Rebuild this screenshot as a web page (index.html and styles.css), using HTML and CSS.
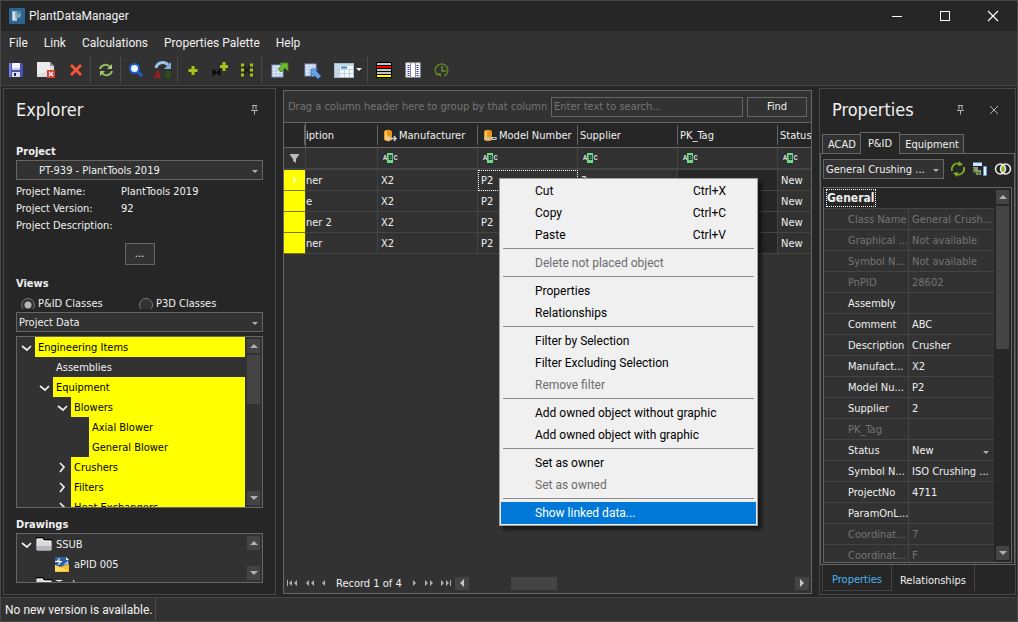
FILE: index.html
```html
<!DOCTYPE html>
<html lang="en">
<head>
<meta charset="utf-8">
<title>PlantDataManager</title>
<link rel="stylesheet" href="styles.css">
</head>
<body>
<div class="window">
  <header class="titlebar">
    <svg class="app-icon" width="16" height="16" viewBox="0 0 16 16"><rect width="16" height="16" rx="1" fill="#2b6590"/><path d="M3 3h5v10H4L3 12z" fill="#a9c3d2"/><path d="M6 3h6v5l-2 2H7z" fill="#7fa2b8"/><path d="M4 4h2v8H4z" fill="#d3e0e6"/><path d="M9 3v3l2-3v3" stroke="#3f7599" fill="none"/></svg>
    <h1 class="app-name">PlantDataManager</h1>
    <div class="win-buttons">
      <button class="win-btn" aria-label="Minimize"><svg width="12" height="12" viewBox="0 0 12 12"><path d="M1 6.5h10" stroke="#fff"/></svg></button>
      <button class="win-btn" aria-label="Maximize"><svg width="12" height="12" viewBox="0 0 12 12"><rect x="1.500" y="1.500" width="9" height="9" fill="none" stroke="#fff"/></svg></button>
      <button class="win-btn" aria-label="Close"><svg width="12" height="12" viewBox="0 0 12 12"><path d="M1 1l10 10M11 1L1 11" stroke="#fff" stroke-width="1.2"/></svg></button>
    </div>
  </header>
  <nav class="menubar">
    <button>File</button><button>Link</button><button>Calculations</button><button>Properties Palette</button><button>Help</button>
  </nav>
  <div class="toolbar">
    <button class="tool" aria-label="Save"><svg width="16" height="16" viewBox="0 0 16 16"><path d="M1 1h13l1 1v13H1z" fill="#4a4fb8"/><path d="M1 1h2v14H1z" fill="#7b80dd"/><rect x="4" y="1" width="8" height="7" fill="#f2f3fb"/><rect x="4" y="6" width="8" height="2" fill="#c9cdf0"/><rect x="4" y="10" width="8" height="5" fill="#dfe1ee"/><rect x="6" y="11" width="2" height="3" fill="#22264f"/></svg></button>
    <button class="tool tool-wide" aria-label="Delete sheet"><svg width="19" height="18" viewBox="0 0 19 18"><path d="M1 1h13l4 4v11H1z" fill="#dcdcdc"/><path d="M1 1h13v8L1 14z" fill="#ececec"/><path d="M14 1l4 4h-4z" fill="#8d8d8d"/><rect x="11" y="9" width="8" height="8" fill="#dd3f33"/><path d="M13 11l4 4M17 11l-4 4" stroke="#fff" stroke-width="1.400"/></svg></button>
    <button class="tool" aria-label="Delete"><svg width="16" height="16" viewBox="0 0 16 16"><path d="M2 4l2-2 4 4 4-4 2 2-4 4 4 4-2 2-4-4-4 4-2-2 4-4z" fill="#e85c44" stroke="#b93020" stroke-width=".7"/></svg></button>
    <span class="tool-sep"></span>
    <button class="tool" aria-label="Refresh"><svg width="16" height="16" viewBox="0 0 16 16"><path d="M2 7c1-4 7-6 10-2M14 9c-1 4-7 6-10 2" fill="none" stroke="#94bb5f" stroke-width="2"/><path d="M14 2v5H9zM2 14V9h5z" fill="#a9cb77"/></svg></button>
    <span class="tool-sep"></span>
    <button class="tool" aria-label="Search"><svg width="16" height="16" viewBox="0 0 16 16"><path d="M9 9l5 5" stroke="#1c62c8" stroke-width="3"/><circle cx="6.500" cy="6.500" r="4.500" fill="#eef6ff" stroke="#1b5ed0" stroke-width="2"/></svg></button>
    <button class="tool" aria-label="Replace"><svg width="18" height="18" viewBox="0 0 18 18"><path d="M2 7c1-6 9-7 12-3" fill="none" stroke="#9cc3e8" stroke-width="3"/><path d="M17 1v7h-7z" fill="#7fb0de"/><text x="0" y="17" class="glyph-a">A</text><text x="11" y="17" class="glyph-b">B</text></svg></button>
    <span class="tool-sep"></span>
    <button class="tool" aria-label="Add"><svg width="16" height="16" viewBox="0 0 16 16"><path d="M8 4v9M3.500 8.500h9" stroke="#a5c413" stroke-width="3"/></svg></button>
    <button class="tool" aria-label="Add valve"><svg width="18" height="18" viewBox="0 0 18 18"><path d="M2 8l7 7V8l-7 7z" fill="#0c0c0c" stroke="#0c0c0c"/><path d="M13 1v9M9 5.500h8" stroke="#a5c413" stroke-width="3"/></svg></button>
    <button class="tool" aria-label="Add group"><svg width="16" height="16" viewBox="0 0 16 16"><path d="M4 3l4 5 4-5M4 13l4-5 4 5" fill="none" stroke="#0c0c0c"/><path d="M2 3h3M2 8h3M2 13h3M11 3h3M11 8h3M11 13h3" stroke="#a5c413" stroke-width="3"/></svg></button>
    <span class="tool-sep"></span>
    <button class="tool tool-wide" aria-label="Export table"><svg width="18" height="18" viewBox="0 0 18 18"><rect x="1" y="4" width="11" height="12" fill="#e8eefb" stroke="#7f95c9"/><path d="M1 7h11M1 10h11M1 13h11M5 4v12M9 4v12" stroke="#b4c3e6"/><path d="M9 2h8v8l-3-3-4 4-3-3 4-4z" fill="#6dbb2f" stroke="#3f8518" stroke-width=".8"/></svg></button>
    <button class="tool tool-wide" aria-label="Import table"><svg width="18" height="18" viewBox="0 0 18 18"><rect x="1" y="3" width="11" height="12" fill="#e8eefb" stroke="#7f95c9"/><path d="M1 6h11M1 9h11M1 12h11M5 3v12M9 3v12" stroke="#b4c3e6"/><path d="M7 8h7l-2 2 5 5-3 3-5-5-2 2z" fill="#69a5e4" stroke="#2a66b4" stroke-width=".8"/></svg></button>
    <button class="tool tool-drop" aria-label="Layouts"><svg width="29" height="18" viewBox="0 0 29 18"><rect x="1.500" y="2.500" width="19" height="14" fill="#f3f7fa" stroke="#a9bccb"/><path d="M2 3h4v13H2zM2 3h18v2H2z" fill="#c8dae6"/><path d="M6.500 3v13M11.500 8v8M16.500 8v8M2 8.500h18M2 12.500h18" stroke="#c0d0dc"/><path d="M8 6.500h6" stroke="#2f88d8" stroke-width="2"/><path d="M23 7h6l-3 3z" fill="#f0f0f0"/></svg></button>
    <span class="tool-sep"></span>
    <button class="tool tool-mid" aria-label="Row colours"><svg width="16" height="16" viewBox="0 0 16 16"><rect width="16" height="16" fill="#000"/><path d="M1 2h14M1 8h14M1 11h14" stroke="#c4c4c4" stroke-width="2"/><path d="M1 5h14" stroke="#f00" stroke-width="2"/><path d="M1 14h14" stroke="#ff0" stroke-width="2"/></svg></button>
    <button class="tool tool-mid" aria-label="Columns"><svg width="16" height="16" viewBox="0 0 16 16"><rect x="1" y="1" width="14" height="14" fill="#fff" stroke="#d9d9d9"/><path d="M5.500 1v14M10.500 1v14" stroke="#8d8d8d"/><path d="M3.500 3v11M12.500 3v11" stroke="#2b2bd8" stroke-width="2" stroke-dasharray="1 1"/></svg></button>
    <button class="tool tool-mid" aria-label="History"><svg width="16" height="16" viewBox="0 0 16 16"><path d="M4 13.500A6.300 6.300 0 1 1 10 14" fill="none" stroke="#5f7f22" stroke-width="1.600"/><path d="M8 4v5h4" fill="none" stroke="#6f9428" stroke-width="1.400"/><path d="M2 11h5v4z" fill="#5f7f22"/></svg></button>
  </div>

  <main class="workspace">
    <section class="dock explorer">
      <div class="dock-head"><h2>Explorer</h2><button class="plain" aria-label="Pin"><svg width="9" height="10" viewBox="0 0 9 10"><path d="M2 .5h5M3 .5v4M6 .5v4M1 5.500h7M4.500 5.500v4" fill="none" stroke="#b4b4b4"/></svg></button></div>
      <div class="explorer-body">
        <label class="section-label" for="project">Project</label>
        <div class="select-wrap"><select id="project" class="combo combo-indent"><option>PT-939 - PlantTools 2019</option></select></div>
        <dl class="info">
          <dt>Project Name:</dt><dd>PlantTools 2019</dd>
          <dt>Project Version:</dt><dd>92</dd>
          <dt>Project Description:</dt><dd></dd>
        </dl>
        <button class="more">...</button>
        <h3 class="section-label">Views</h3>
        <div class="radios">
          <label><input type="radio" name="view" checked>P&amp;ID Classes</label>
          <label><input type="radio" name="view">P3D Classes</label>
        </div>
        <div class="select-wrap"><select class="combo" aria-label="View data"><option>Project Data</option></select></div>
        <div class="tree-box classes">
          <ul class="tree">
            <li class="l0 mark"><svg class="chev" viewBox="0 0 18 20"><path d="M5 9l5 4 4-4"/></svg><span>Engineering Items</span></li>
            <li class="l1"><i class="chev"></i><span>Assemblies</span></li>
            <li class="l1 mark"><svg class="chev" viewBox="0 0 18 20"><path d="M5 9l5 4 4-4"/></svg><span>Equipment</span></li>
            <li class="l2 mark"><svg class="chev" viewBox="0 0 18 20"><path d="M5 9l5 4 4-4"/></svg><span>Blowers</span></li>
            <li class="l3 mark"><i class="chev"></i><span>Axial Blower</span></li>
            <li class="l3 mark"><i class="chev"></i><span>General Blower</span></li>
            <li class="l2 mark"><svg class="chev" viewBox="0 0 18 20"><path d="M7 6l4 4-4 5"/></svg><span>Crushers</span></li>
            <li class="l2 mark"><svg class="chev" viewBox="0 0 18 20"><path d="M7 6l4 4-4 5"/></svg><span>Filters</span></li>
            <li class="l2 mark"><svg class="chev" viewBox="0 0 18 20"><path d="M7 6l4 4-4 5"/></svg><span>Heat Exchangers</span></li>
          </ul>
          <div class="vscroll"><button aria-label="Up" class="sb up"></button><i class="thumb"></i><button aria-label="Down" class="sb down"></button></div>
        </div>
        <h3 class="section-label">Drawings</h3>
        <div class="tree-box drawings">
          <ul class="tree">
            <li class="l0"><svg class="chev" viewBox="0 0 18 20"><path d="M5 9l5 4 4-4"/></svg><svg class="node-icon" viewBox="0 0 16 16"><path d="M1 3h6l1 2h7v9H1z" fill="#d9d9dd" stroke="#fff"/><path d="M1 10h14v4H1z" fill="#b5b5bb"/><path d="M0 1.500h7.500v2H16" stroke="#000" fill="none"/></svg><span>SSUB</span></li>
            <li class="l1"><i class="chev"></i><svg class="node-icon" viewBox="0 0 16 16"><path d="M1 1h11l3 3v7H1z" fill="#2f5f9c"/><path d="M12 1l3 3h-3z" fill="#fff"/><path d="M5 2v7M1 5.500h7M3 4l4 3" stroke="#fff" fill="none"/><path d="M1 9l5 2 9-3v8H1z" fill="#f6c12c"/><path d="M1 9l7 3 7 3H1z" fill="#ffdd63"/><path d="M9 9l5-4v3z" fill="#a9d4ff"/></svg><span>aPID 005</span></li>
            <li class="l0"><i class="chev"></i><svg class="node-icon" viewBox="0 0 16 16"><path d="M1 3h6l1 2h7v9H1z" fill="#d9d9dd" stroke="#fff"/><path d="M0 1.500h7.500v2H16" stroke="#000" fill="none"/></svg><span>Tool</span></li>
          </ul>
          <div class="vscroll"><button aria-label="Up" class="sb up"></button><button aria-label="Down" class="sb down"></button></div>
        </div>
      </div>
    </section>

    <section class="grid-panel">
      <div class="group-bar">
        <span class="group-hint">Drag a column header here to group by that column</span>
        <input class="search" type="text" placeholder="Enter text to search..." aria-label="Search text">
        <button class="find">Find</button>
      </div>
      <table class="data">
        <colgroup><col class="c-ind"><col class="c-desc"><col class="c-std"><col class="c-std"><col class="c-std"><col class="c-std"><col></colgroup>
        <thead>
          <tr><th></th><th class="cut">iption</th>
            <th><svg class="db" viewBox="0 0 14 14"><path d="M1 3c0-3 8-3 8 0v7c0 3-8 3-8 0z" fill="#e8961c"/><path d="M2 2h2v9H2z" fill="#ffc95c"/><path d="M4 9.500h9M6 7L4 9.500 6 12M11 7l2 2.500-2 2.500" fill="none" stroke="#d5d5d5" stroke-width="1.300"/></svg>Manufacturer</th>
            <th><svg class="db" viewBox="0 0 14 14"><path d="M1 3c0-3 8-3 8 0v7c0 3-8 3-8 0z" fill="#e8961c"/><path d="M2 2h2v9H2z" fill="#ffc95c"/><path d="M2 8.500h4v2H2zM9 8.500h4v2H9zM5 9.500h5" fill="none" stroke="#c5c5c5" stroke-width="1.200"/></svg>Model Number</th>
            <th>Supplier</th><th>PK_Tag</th><th class="last">Status</th></tr>
          <tr class="filters"><td class="ind"><svg width="9" height="9" viewBox="0 0 9 9"><path d="M0 0h9v1L6 5v4L3 7V5L0 1z" fill="#b9b9b9"/></svg></td><td></td>
            <td><span class="abc">A<b>B</b>C</span></td><td><span class="abc">A<b>B</b>C</span></td><td><span class="abc">A<b>B</b>C</span></td><td><span class="abc">A<b>B</b>C</span></td><td><span class="abc">A<b>B</b>C</span></td></tr>
        </thead>
        <tbody>
          <tr><td class="ind yel"><svg width="5" height="8" viewBox="0 0 5 8"><path d="M1 0l4 4-4 4z" fill="#ffffa0"/></svg></td><td class="cut">ner</td><td>X2</td><td class="focus">P2</td><td>2</td><td class="off"></td><td>New</td></tr>
          <tr><td class="ind yel"></td><td class="cut">e</td><td>X2</td><td>P2</td><td></td><td class="off"></td><td>New</td></tr>
          <tr><td class="ind yel"></td><td class="cut">ner 2</td><td>X2</td><td>P2</td><td></td><td class="off"></td><td>New</td></tr>
          <tr><td class="ind yel"></td><td class="cut">ner</td><td>X2</td><td>P2</td><td></td><td class="off"></td><td>New</td></tr>
        </tbody>
      </table>
      <footer class="navigator">
        <button class="plain" aria-label="First"><svg width="11" height="6" viewBox="0 0 11 6"><path d="M0 0h1v6H0zM5 0v6L2 3zM10 0v6L7 3z"/></svg></button>
        <button class="plain" aria-label="Previous page"><svg width="8" height="6" viewBox="0 0 8 6"><path d="M3 0v6L0 3zM8 0v6L5 3z"/></svg></button>
        <button class="plain" aria-label="Previous"><svg width="4" height="6" viewBox="0 0 4 6"><path d="M3 0v6L0 3z"/></svg></button>
        <span class="record">Record 1 of 4</span>
        <button class="plain" aria-label="Next"><svg width="4" height="6" viewBox="0 0 4 6"><path d="M0 0v6l3-3z"/></svg></button>
        <button class="plain" aria-label="Next page"><svg width="8" height="6" viewBox="0 0 8 6"><path d="M0 0v6l3-3zM5 0v6l3-3z"/></svg></button>
        <button class="plain" aria-label="Last"><svg width="10" height="6" viewBox="0 0 10 6"><path d="M0 0v6l3-3zM5 0v6l3-3zM9 0h1v6H9z"/></svg></button>
        <div class="hscroll"><button aria-label="Left" class="sb left"></button><i class="hthumb"></i><button aria-label="Right" class="sb right"></button></div>
      </footer>
    </section>

    <section class="dock props">
      <div class="dock-head"><h2>Properties</h2><button class="plain" aria-label="Pin"><svg width="9" height="10" viewBox="0 0 9 10"><path d="M2 .5h5M3 .5v4M6 .5v4M1 5.500h7M4.500 5.500v4" fill="none" stroke="#b4b4b4"/></svg></button><button class="plain" aria-label="Close panel"><svg width="10" height="10" viewBox="0 0 10 10"><path d="M1 1l8 8M9 1L1 9" stroke="#b4b4b4"/></svg></button></div>
      <div class="tabs"><button>ACAD</button><button class="active">P&amp;ID</button><button>Equipment</button></div>
      <div class="props-body">
        <div class="props-bar">
          <div class="select-wrap"><select class="combo" aria-label="Object"><option>General Crushing ...</option></select></div>
          <button class="plain" aria-label="Reload"><svg width="16" height="16" viewBox="0 0 16 16"><path d="M2 10C1 5 5 1 10 3M14 6c1 5-3 9-8 7" fill="none" stroke="#7fae22" stroke-width="1.800"/><path d="M9 0l4 4-5 1zM7 16l-4-4 5-1z" fill="#7fae22"/></svg></button>
          <button class="plain" aria-label="Transfer"><svg width="16" height="16" viewBox="0 0 16 16"><path d="M1 1h9v4H1z" fill="#d5e8f8"/><path d="M1 1h9v1H1z" fill="#4b8fd0"/><path d="M11.500 5.500h3v9h-3z" fill="#e8f3fc" stroke="#5f9bd3"/><path d="M1 6h5v3h3v5H4v-3H1z" fill="#8b9b7b"/><path d="M2 7v5h6M6 10l2 2-2 2" fill="none" stroke="#3c7020"/></svg></button>
          <button class="plain" aria-label="Compare"><svg width="18" height="16" viewBox="0 0 18 16"><path d="M9 4a5 5 0 0 1 0 8 5 5 0 0 1 0-8z" fill="#8dbb1f"/><circle cx="6.500" cy="8" r="5" fill="none" stroke="#eee" stroke-width="1.500"/><circle cx="11.500" cy="8" r="5" fill="none" stroke="#eee" stroke-width="1.500"/></svg></button>
        </div>
        <div class="prop-box">
          <div class="prop-list">
            <div class="category"><span>General</span></div>
            <table class="prop-table">
              <colgroup><col class="c-name"><col></colgroup>
              <tbody>
              <tr class="ro"><th>Class Name</th><td>General Crush...</td></tr>
              <tr class="ro"><th>Graphical ...</th><td>Not available</td></tr>
              <tr class="ro"><th>Symbol N...</th><td>Not available</td></tr>
              <tr class="ro"><th>PnPID</th><td>28602</td></tr>
              <tr><th>Assembly</th><td></td></tr>
              <tr><th>Comment</th><td>ABC</td></tr>
              <tr><th>Description</th><td>Crusher</td></tr>
              <tr><th>Manufact...</th><td>X2</td></tr>
              <tr><th>Model Nu...</th><td>P2</td></tr>
              <tr><th>Supplier</th><td>2</td></tr>
              <tr class="ro"><th>PK_Tag</th><td></td></tr>
              <tr><th>Status</th><td><div class="select-wrap flat"><select aria-label="Status"><option>New</option></select></div></td></tr>
              <tr><th>Symbol N...</th><td>ISO Crushing ...</td></tr>
              <tr><th>ProjectNo</th><td>4711</td></tr>
              <tr><th>ParamOnL...</th><td></td></tr>
              <tr class="ro"><th>Coordinat...</th><td>7</td></tr>
              <tr class="ro"><th>Coordinat...</th><td>F</td></tr>
              </tbody>
            </table>
          </div>
          <div class="vscroll"><button aria-label="Up" class="sb up"></button><i class="thumb long"></i><button aria-label="Down" class="sb down"></button></div>
        </div>
      </div>
      <div class="bottom-tabs"><button class="active">Properties</button><button>Relationships</button></div>
    </section>
  </main>

  <footer class="statusbar"><span>No new version is available.</span></footer>

  <div class="context-menu" role="menu">
    <button><span>Cut</span><kbd>Ctrl+X</kbd></button>
    <button><span>Copy</span><kbd>Ctrl+C</kbd></button>
    <button><span>Paste</span><kbd>Ctrl+V</kbd></button>
    <hr>
    <button disabled>Delete not placed object</button>
    <hr>
    <button>Properties</button>
    <button>Relationships</button>
    <hr>
    <button>Filter by Selection</button>
    <button>Filter Excluding Selection</button>
    <button disabled>Remove filter</button>
    <hr>
    <button>Add owned object without graphic</button>
    <button>Add owned object with graphic</button>
    <hr>
    <button>Set as owner</button>
    <button disabled>Set as owned</button>
    <hr>
    <button class="hot">Show linked data...</button>
  </div>
</div>
</body>
</html>
```
FILE: styles.css
```css
:root {
  --bg: #262626;
  --panel: #323232;
  --line: #444;
  --edge: #666;
  --text: #f0f0f0;
  --dim: #757575;
  --ui: "DejaVu Sans Condensed", "DejaVu Sans", sans-serif;
  --shell: Roboto, "Open Sans", sans-serif;
}
* { box-sizing: border-box; }
body { margin: 0; background: var(--bg); color: var(--text); font: 11px/14px var(--ui); }
h1, h2, h3, ul, dl, dd { margin: 0; padding: 0; }
button, input, select { font: inherit; color: inherit; margin: 0; border-radius: 0; }
button { background: none; border: 0; padding: 0; }
svg { display: block; }
.plain { display: flex; flex: none; }

.window { position: relative; display: flex; flex-direction: column; height: 100vh; border: 1px solid #484848; overflow: hidden; }
.titlebar { display: flex; align-items: center; gap: 4px; height: 30px; flex: none; padding-left: 8px; font: 12px/16px var(--shell); }
.app-name { flex: 1; font: inherit; }
.win-buttons { display: flex; }
.win-btn { width: 48px; height: 28px; display: flex; align-items: center; justify-content: center; }
.menubar { display: flex; flex: none; gap: 16px; height: 24px; padding-left: 8px; background: var(--panel); font: 12px/24px var(--shell); }
.toolbar { display: flex; flex: none; align-items: center; height: 31px; padding-left: 1px; background: var(--panel); border-bottom: 1px solid var(--line); }
.tool { width: 27px; height: 27px; display: flex; align-items: center; justify-content: center; flex: none; }
.tool-mid { width: 29px; }
.tool-wide { width: 33px; }
.tool-drop { width: 37px; }
.tool-sep { width: 1px; height: 26px; margin: 0 1px; background: #4a4a4a; flex: none; }
.glyph-a { font: bold 8px "DejaVu Sans", sans-serif; fill: #b01818; }
.glyph-b { font: bold 8px "DejaVu Sans", sans-serif; fill: #2c5a14; }

.workspace { flex: 1; min-height: 0; display: grid; grid-template-columns: 273px minmax(0, 1fr) 197px; gap: 7px; padding: 2px 1px 2px 2px; }
.dock { border: 1px solid #484848; display: flex; flex-direction: column; min-height: 0; min-width: 0; }
.dock-head { display: flex; align-items: center; flex: none; height: 42px; padding: 0 16px 0 12px; }
.dock-head h2 { flex: 1; font: 18px/24px var(--ui); }

.select-wrap { position: relative; display: flex; min-width: 0; }
.select-wrap select { appearance: none; flex: 1; min-width: 0; background: var(--panel); outline: 0; }
.select-wrap::after { content: ""; position: absolute; right: 5px; top: 50%; border: 3px solid transparent; border-top-color: #b0b0b0; border-bottom: 0; }
.combo { height: 20px; border: 1px solid var(--edge); padding: 1px 14px 0 2px; }
.combo-indent { padding-left: 22px; }
.flat select { border: 0; height: 18px; padding: 0; }

.explorer-body { flex: 1; min-height: 0; display: flex; flex-direction: column; padding: 13px 12px 11px; }
.section-label { display: block; flex: none; font-size: 11px; font-weight: bold; line-height: 16px; }
.info { display: grid; grid-template-columns: 105px 1fr; line-height: 17px; padding: 3px 0 9px; }
.more { width: 30px; height: 22px; flex: none; align-self: center; border: 1px solid var(--edge); background: var(--panel); line-height: 14px; margin-bottom: 11px; }
.radios { display: grid; grid-template-columns: 118px 1fr; flex: none; height: 13px; padding-left: 5px; margin: 4px 0 3px; line-height: 16px; overflow: hidden; }
.radios label { display: flex; gap: 3px; }
.radios input { appearance: none; width: 14px; height: 14px; flex: none; margin: 2px 0 0; border: 1px solid #777; border-radius: 50%; background: var(--panel); }
.radios input:checked { background: radial-gradient(circle, #b8b8b8 3px, var(--panel) 4px); }

.tree-box { display: flex; border: 1px solid var(--edge); background: var(--panel); overflow: hidden; }
.classes { flex: 1; min-height: 0; margin: 4px 0 9px; }
.drawings { flex: none; height: 50px; }
.tree { flex: 1; min-width: 0; list-style: none; }
.tree li { display: flex; height: 20px; align-items: center; }
.tree .chev { width: 18px; height: 20px; flex: none; fill: none; stroke: #f0f0f0; stroke-width: 1.700; }
.tree span { flex: 1; padding: 2px 0 0 3px; line-height: 18px; }
.tree .mark span { background: #ff0; color: #000; }
.tree .l1 { padding-left: 18px; }
.tree .l2 { padding-left: 36px; }
.tree .l3 { padding-left: 54px; }
.node-icon { width: 16px; height: 16px; flex: none; margin: 0 1px 0 1px; }

.vscroll { display: flex; flex-direction: column; width: 17px; flex: none; padding: 2px; gap: 2px; }
.vscroll .sb { width: 13px; height: 14px; }
.sb { flex: none; display: flex; align-items: center; justify-content: center; background: #444; }
.sb::before { content: ""; border: 4px solid transparent; }
.up::before { border-bottom-color: #b0b0b0; border-top: 0; }
.down::before { border-top-color: #b0b0b0; border-bottom: 0; }
.left::before { border-right-color: #c8c8c8; border-left: 0; }
.right::before { border-left-color: #c8c8c8; border-right: 0; }
.thumb { width: 13px; height: 49px; background: #444; }
.thumb.long { height: 143px; }
.vscroll .down { margin-top: auto; }

.grid-panel { display: flex; flex-direction: column; min-width: 0; min-height: 0; margin: 2px 0 1px; border: 1px solid var(--edge); background: var(--panel); }
.group-bar { display: flex; align-items: center; flex: none; height: 32px; padding: 0 4px; border-bottom: 1px solid var(--edge); }
.group-hint { flex: 1; white-space: nowrap; color: var(--dim); overflow: hidden; }
.search { width: 192px; height: 20px; border: 1px solid var(--edge); background: var(--panel); padding: 0 2px; margin-right: 4px; }
.search::placeholder { color: var(--dim); }
.find { width: 60px; height: 20px; border: 1px solid var(--edge); background: var(--panel); }
.data { width: 100%; table-layout: fixed; border-collapse: separate; border-spacing: 0; flex: none; }
.c-ind { width: 22px; }
.c-desc { width: 72px; }
.c-std { width: 100px; }
.data th, .data td { overflow: hidden; white-space: nowrap; text-align: left; font-weight: normal; }
.data th { height: 25px; padding: 1px 0 0 2px; background: linear-gradient(var(--edge), var(--edge)) right center / 1px 20px no-repeat var(--bg); border-bottom: 1px solid var(--edge); }
.data th.last { background: var(--bg); }
.data th:first-child { border-right: 1px solid var(--edge); }
.data td { height: 21px; padding: 2px 0 0 3px; border-right: 1px solid var(--line); border-bottom: 1px solid var(--line); }
.data td:last-child { border-right: 0; }
.data .cut { padding-left: 0; }
.data .filters td { height: 22px; border-bottom-width: 2px; padding-top: 0; }
.data .ind { padding: 0; }
.data .ind svg { margin: 0 auto; }
.data .yel { background: #ff0; border-bottom-color: #777700; }
.data .off { background: var(--bg); }
.data .focus { outline: 1px dotted #fff; outline-offset: -1px; }
.db { display: inline-block; width: 14px; height: 14px; margin: 0 2px 0 3px; vertical-align: middle; }
.abc { display: flex; align-items: center; font: bold 7px/10px "Liberation Mono", monospace; color: #ddd; padding-left: 2px; }
.abc b { background: #6fdc84; color: #123; padding: 0 1px; }
.navigator { display: flex; align-items: center; margin-top: auto; height: 18px; padding: 0 2px 2px 3px; gap: 8px; }
.navigator svg { fill: #b0b0b0; }
.navigator .record { white-space: nowrap; padding: 1px 3px 0 2px; }
.hscroll { flex: 1; display: flex; margin-left: -4px; }
.hscroll .sb { width: 14px; height: 13px; }
.hthumb { width: 46px; height: 13px; background: #444; margin-left: 12%; margin-right: auto; }

.props .dock-head { gap: 24px; }
.tabs { display: flex; align-items: flex-end; flex: none; height: 20px; padding-left: 2px; margin-top: 2px; position: relative; z-index: 1; }
.tabs button { height: 19px; border: 1px solid var(--edge); border-width: 1px 1px 0 0; padding: 1px 4px 0 5px; background: var(--panel); }
.tabs button:first-child { border-left-width: 1px; }
.tabs .active { height: 22px; margin-bottom: -1px; padding: 0 7px; border-left-width: 1px; margin-left: -1px; background: var(--bg); }
.props-body { flex: 1; min-height: 0; display: flex; flex-direction: column; border: 1px solid var(--edge); padding: 5px 2px 1px; }
.props-bar { display: flex; align-items: center; gap: 6px; margin-bottom: 8px; flex: none; }
.props-bar .select-wrap { flex: 1; }
.prop-box { flex: 1; min-height: 0; display: flex; border: 1px solid var(--edge); overflow: hidden; }
.prop-list { flex: 1; min-width: 0; background: var(--panel); }
.category { height: 21px; padding: 2px 3px; background: var(--bg); font-weight: bold; font-size: 12px; border-bottom: 1px solid var(--line); }
.category span { display: inline-block; outline: 1px dotted #fff; line-height: 16px; }
.prop-table { width: 100%; table-layout: fixed; border-spacing: 0; }
.c-name { width: 85px; }
.prop-table th, .prop-table td { height: 21px; padding: 2px 0 0 3px; text-align: left; font-weight: normal; white-space: nowrap; overflow: hidden; border-bottom: 1px solid var(--line); }
.prop-table th { padding-left: 24px; border-right: 1px solid var(--line); }
.prop-table .ro { color: var(--dim); }
.bottom-tabs { display: flex; flex: none; height: 29px; padding: 0 0 3px 2px; }
.bottom-tabs button { padding: 5px 8px 0; border-right: 1px solid var(--line); }
.bottom-tabs .active { color: #4ab4f0; border: 1px solid var(--line); border-top: 0; padding: 5px 9px 0; }

.statusbar { flex: none; display: flex; height: 24px; background: var(--panel); border-top: 1px solid var(--line); font: 12px/22px var(--shell); }
.statusbar span { padding: 1px 3px 0 4px; border-right: 1px solid #4a4a4a; }

.context-menu { position: absolute; left: 498px; top: 177px; width: 259px; padding: 1px; background: #f0f0f0; border: 1px solid #a0a0a0; box-shadow: 4px 4px 3px rgba(0, 0, 0, .5); font: 12px/22px var(--shell); color: #000; }
.context-menu button { display: flex; justify-content: space-between; width: 100%; height: 22px; padding: 0 30px 0 34px; }
.context-menu button:disabled { color: #6d6d6d; }
.context-menu kbd { font: inherit; }
.context-menu hr { height: 1px; margin: 2px 2px 3px; border: 0; background: #8c8c8c; }
.context-menu .hot { background: #0078d7; color: #fff; }
```
